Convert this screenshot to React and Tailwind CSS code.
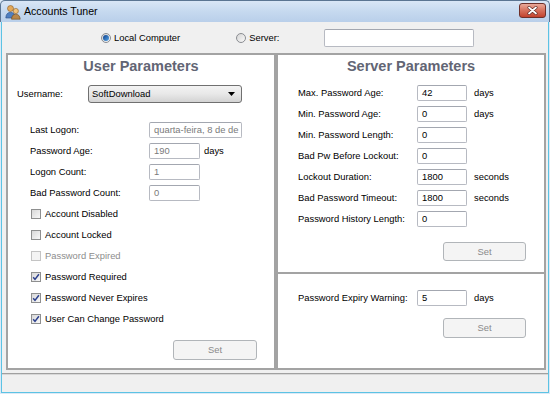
import React from "react";

function TextBox({ w = "w-[50px]", value, disabled }) {
  return (
    <div
      className={`${w} h-[16px] shrink-0 bg-white border border-[#b7bac2] border-t-[#a3a7b0] rounded-[2px] flex items-center pl-[4px] overflow-hidden whitespace-nowrap ${
        disabled ? "text-[#7a7a7a]" : "text-black"
      }`}
    >
      {value}
    </div>
  );
}

function CheckBox({ checked, disabled, label }) {
  return (
    <div className="h-[21px] flex items-center">
      <div
        className={`w-[10px] h-[10px] shrink-0 border flex items-center justify-center ${
          disabled
            ? "border-[#c4c4c4] bg-[#f4f4f4]"
            : "border-[#8e8f8f] bg-gradient-to-br from-[#d8d8d8] to-[#f8f8f8]"
        }`}
      >
        {checked && (
          <svg width="8" height="8" viewBox="0 0 8 8">
            <path d="M1.2 4.2 L3 6.4 L6.9 1.2" fill="none" stroke="#2b3f8c" strokeWidth="1.5" />
          </svg>
        )}
      </div>
      <span className={`ml-[4px] ${disabled ? "text-[#8d8d8d]" : "text-black"}`}>{label}</span>
    </div>
  );
}

function Radio({ checked }) {
  return (
    <div className="w-[10px] h-[10px] shrink-0 rounded-full border border-[#8a8d92] bg-gradient-to-br from-[#d5d5d5] to-[#fafafa] flex items-center justify-center">
      {checked && <div className="w-[6px] h-[6px] rounded-full bg-gradient-to-br from-[#0f3f8a] to-[#58a8ea]" />}
    </div>
  );
}

function SetButton({ h = "h-[20px]", w = "w-[84px]", mr = "mr-[17px]" }) {
  return (
    <div
      className={`${w} ${h} ${mr} self-end border border-[#b1b5b9] rounded-[3px] bg-[#f4f4f4] text-[#8a8a8a] flex items-center justify-center`}
    >
      Set
    </div>
  );
}

function Row({ label, children }) {
  return (
    <div className="h-[21px] flex items-center">
      <span className="w-[119px] shrink-0 whitespace-nowrap">{label}</span>
      {children}
    </div>
  );
}

function ServerRow({ label, value, unit }) {
  return (
    <Row label={label}>
      <TextBox value={value} />
      {unit && <span className="ml-[7px]">{unit}</span>}
    </Row>
  );
}

export default function App() {
  return (
    <div className="w-[550px] h-[394px] overflow-hidden flex flex-col bg-[#dce9f6] font-['Liberation_Sans',Arial,sans-serif] text-[9.4px] leading-none text-black">
      {/* Title bar */}
      <div className="h-[22px] shrink-0 flex items-center border-t border-x border-[#5b7592] rounded-t-[5px] bg-gradient-to-b from-[#d9e6f6] via-[#c6d9ef] to-[#b9cfea]">
        <svg width="16" height="16" viewBox="0 0 16 16" className="ml-[4px]">
          <circle cx="5.5" cy="4.5" r="3" fill="#e2a85a" stroke="#8a5a22" strokeWidth="0.6" />
          <path d="M0.8 14 Q1 8.5 5.5 8.3 Q10 8.5 10.2 14 Z" fill="#4f7fc0" stroke="#2c4f85" strokeWidth="0.6" />
          <circle cx="10.8" cy="7" r="2.6" fill="#f1c27a" stroke="#8a5a22" strokeWidth="0.6" />
          <path d="M6.5 15.2 Q6.8 10.3 10.8 10.2 Q14.8 10.3 15.2 15.2 Z" fill="#b8874a" stroke="#6a4a20" strokeWidth="0.6" />
        </svg>
        <span className="ml-[3px] text-[10.6px] text-black">Accounts Tuner</span>
        <div className="ml-auto mr-[3px] mt-[-3px] w-[27px] h-[15px] rounded-[3px] border border-[#6e302a] bg-gradient-to-b from-[#e9a99a] via-[#d6705c] to-[#c2412d] flex items-center justify-center">
          <svg width="11" height="9" viewBox="0 0 11 9">
            <path d="M2 1.5 L9 7.5 M9 1.5 L2 7.5" stroke="#5a2520" strokeWidth="3" strokeLinecap="round" />
            <path d="M2 1.5 L9 7.5 M9 1.5 L2 7.5" stroke="#ffffff" strokeWidth="1.8" strokeLinecap="round" />
          </svg>
        </div>
      </div>

      {/* Client */}
      <div className="flex-1 mx-[1px] mb-[1px] border-x border-b border-[#5cc3e4] bg-[#f0f0f0] flex flex-col">
        {/* radio row */}
        <div className="h-[31px] shrink-0 flex items-center">
          <div className="ml-[99px]">
            <Radio checked />
          </div>
          <span className="ml-[3px]">Local Computer</span>
          <div className="ml-[56px]">
            <Radio />
          </div>
          <span className="ml-[3px]">Server:</span>
          <div className="ml-[45px] w-[150px] h-[18px] bg-white border border-[#b7bac2] border-t-[#a3a7b0] rounded-[2px]" />
        </div>

        {/* panels */}
        <div className="h-[317px] shrink-0 flex pl-[4px]">
          {/* Left panel */}
          <div className="w-[270px] h-full border-2 border-[#a3a3a3] bg-white flex flex-col">
            <div className="h-[22px] flex items-center justify-center text-[14.5px] font-bold text-[#626574]">
              User Parameters
            </div>
            <div className="mt-[8px] h-[18px] flex items-center pl-[9px]">
              <span className="w-[71px] shrink-0">Username:</span>
              <div className="w-[154px] h-[18px] rounded-[3px] border border-[#707070] bg-gradient-to-b from-[#f3f3f3] via-[#e8e8e8] to-[#d3d3d3] flex items-center pl-[3px]">
                <span>SoftDownload</span>
                <svg width="7" height="4" viewBox="0 0 7 4" className="ml-auto mr-[6px]">
                  <path d="M0 0 L7 0 L3.5 4 Z" fill="#000" />
                </svg>
              </div>
            </div>
            <div className="mt-[16px] pl-[22px] flex flex-col">
              <Row label="Last Logon:">
                <TextBox w="w-[93px]" value="quarta-feira, 8 de de" disabled />
              </Row>
              <Row label="Password Age:">
                <TextBox w="w-[51px]" value="190" disabled />
                <span className="ml-[4px]">days</span>
              </Row>
              <Row label="Logon Count:">
                <TextBox w="w-[51px]" value="1" disabled />
              </Row>
              <Row label="Bad Password Count:">
                <TextBox w="w-[51px]" value="0" disabled />
              </Row>
            </div>
            <div className="pl-[23px] flex flex-col">
              <CheckBox label="Account Disabled" />
              <CheckBox label="Account Locked" />
              <CheckBox label="Password Expired" disabled />
              <CheckBox label="Password Required" checked />
              <CheckBox label="Password Never Expires" checked />
              <CheckBox label="User Can Change Password" checked />
            </div>
            <div className="mt-[11px] flex flex-col">
              <SetButton />
            </div>
          </div>

          {/* Right panel */}
          <div className="w-[270px] h-full border-2 border-[#a3a3a3] bg-white flex flex-col">
            <div className="h-[219px] shrink-0 border-b-2 border-[#a3a3a3] flex flex-col">
              <div className="h-[22px] flex items-center justify-center text-[14.5px] font-bold text-[#626574]">
                Server Parameters
              </div>
              <div className="mt-[5px] pl-[20px] flex flex-col">
                <ServerRow label="Max. Password Age:" value="42" unit="days" />
                <ServerRow label="Min. Password Age:" value="0" unit="days" />
                <ServerRow label="Min. Password Length:" value="0" />
                <ServerRow label="Bad Pw Before Lockout:" value="0" />
                <ServerRow label="Lockout Duration:" value="1800" unit="seconds" />
                <ServerRow label="Bad Password Timeout:" value="1800" unit="seconds" />
                <ServerRow label="Password History Length:" value="0" />
              </div>
              <div className="mt-[13px] flex flex-col">
                <SetButton w="w-[83px]" h="h-[19px]" mr="mr-[18px]" />
              </div>
            </div>
            <div className="pt-[13px] flex flex-col">
              <div className="pl-[20px]">
                <ServerRow label="Password Expiry Warning:" value="5" unit="days" />
              </div>
              <div className="mt-[10px] flex flex-col">
                <SetButton w="w-[83px]" mr="mr-[18px]" />
              </div>
            </div>
          </div>
        </div>

        {/* status bar */}
        <div className="mt-[3px] flex-1 border-t border-[#a0a0a0] shadow-[inset_0_1px_0_#d8d8d8] bg-[#f0f0f0]" />
      </div>
    </div>
  );
}
